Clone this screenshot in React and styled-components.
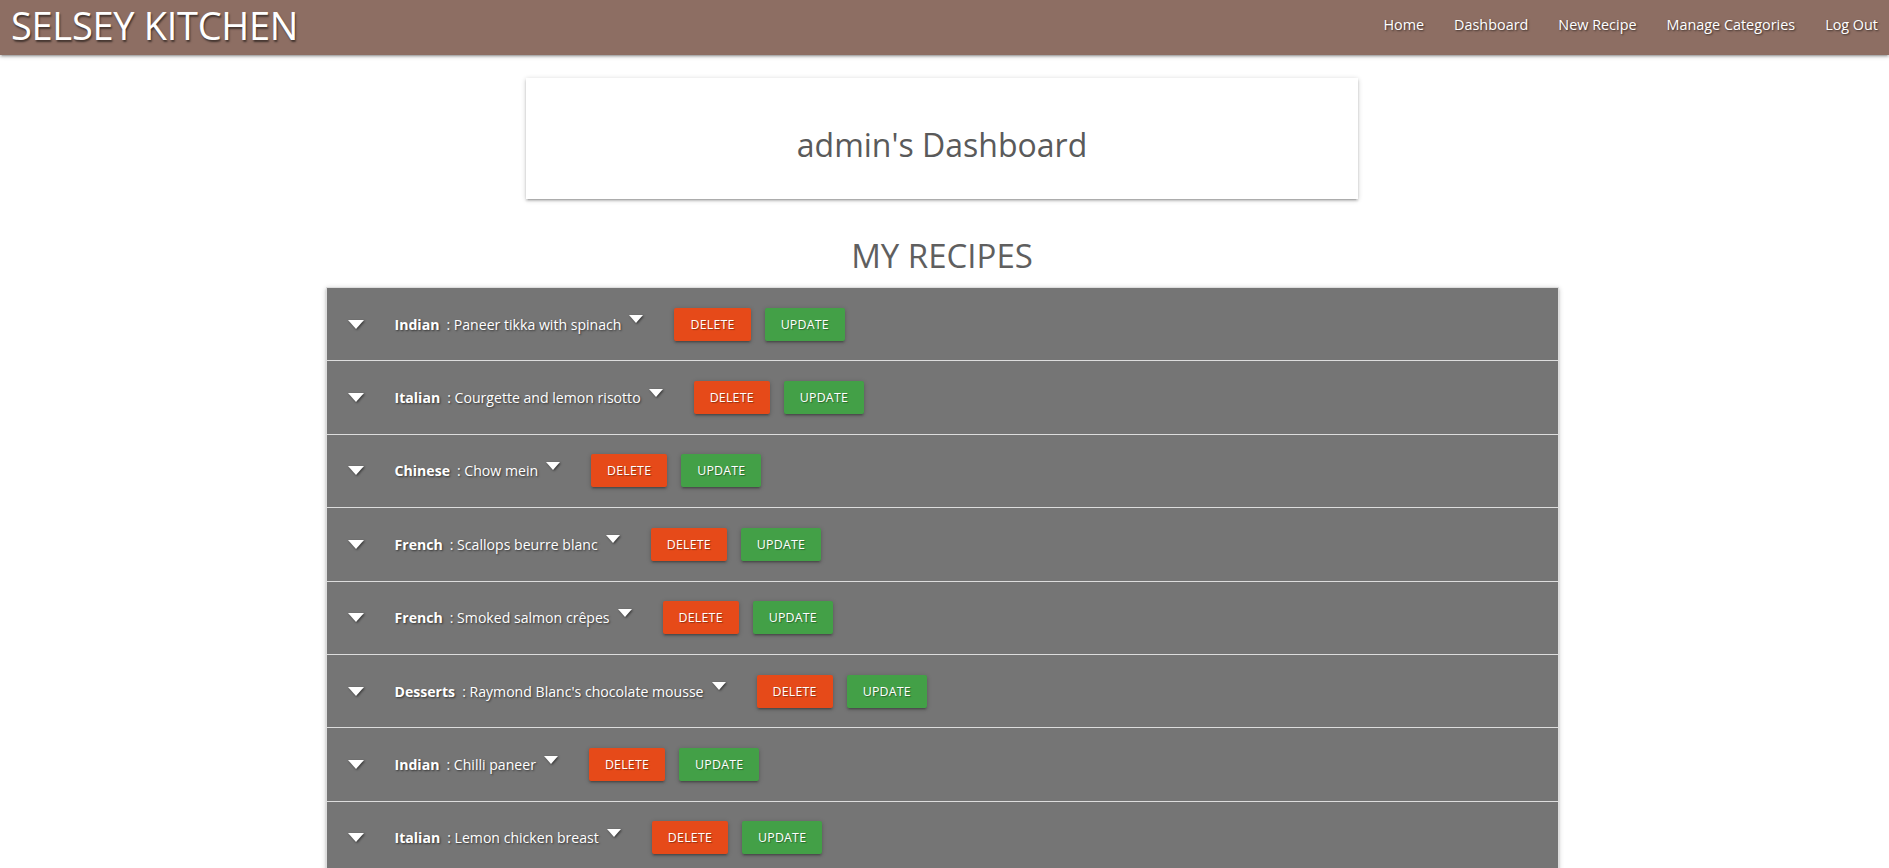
import React from "react";
import styled, { createGlobalStyle } from "styled-components";

const Global = createGlobalStyle`
  html, body { margin: 0; padding: 0; background: #fff; }
  body { font-family: "Open Sans", "Noto Sans", sans-serif; }
  * { box-sizing: border-box; }
`;

const Header = styled.header`
  height: 55px;
  background: #8d6e63;
  display: flex;
  align-items: center;
  justify-content: space-between;
  padding: 0 11px 0 11px;
  box-shadow: 0 2px 2px 0 rgba(0,0,0,0.14), 0 3px 1px -2px rgba(0,0,0,0.12), 0 1px 5px 0 rgba(0,0,0,0.2);
  position: relative;
  z-index: 2;
`;

const Brand = styled.a`
  color: #fff;
  font-size: 38px;
  line-height: 50px;
  margin-bottom: 5px;
  text-decoration: none;
  letter-spacing: -0.3px;
  text-shadow: 1px 2px 2px rgba(0,0,0,0.55);
`;

const Nav = styled.nav`
  display: flex;
  gap: 30px;
  margin-bottom: 7px;
`;

const NavLink = styled.a`
  color: #fff;
  font-size: 14.4px;
  text-decoration: none;
  text-shadow: 1px 1px 2px rgba(0,0,0,0.6);
`;

const Main = styled.main`
  padding-top: 23px;
  padding-right: 5px;
  display: flex;
  flex-direction: column;
  align-items: center;
`;

const Card = styled.section`
  width: 832px;
  height: 121px;
  display: flex;
  align-items: center;
  justify-content: center;
  padding-top: 13px;
  background: #fff;
  box-shadow: 0 2px 2px 0 rgba(0,0,0,0.14), 0 3px 1px -2px rgba(0,0,0,0.12), 0 1px 5px 0 rgba(0,0,0,0.2);
`;

const CardTitle = styled.h1`
  margin: 0;
  font-size: 32px;
  line-height: 44px;
  font-weight: 400;
  color: #5a5a5a;
`;

const SectionTitle = styled.h2`
  margin: 37px 0 11px;
  font-size: 33px;
  line-height: 40px;
  font-weight: 400;
  color: #5f5f5f;
`;

const List = styled.ul`
  list-style: none;
  margin: 0;
  padding: 0;
  width: 1233px;
  border: 1px solid #ddd;
  border-bottom: none;
  box-shadow: 0 2px 2px 0 rgba(0,0,0,0.14), 0 3px 1px -2px rgba(0,0,0,0.12), 0 1px 5px 0 rgba(0,0,0,0.2);
`;

const Row = styled.li`
  height: 73.4px;
  display: flex;
  align-items: center;
  padding-left: 21px;
  background: #757575;
  border-bottom: 1px solid #ddd;
  color: #fff;
`;

const Arrow = styled.svg`
  width: 16px;
  height: 9px;
  flex: none;
  filter: drop-shadow(1px 1px 1px rgba(0,0,0,0.55));
`;

const Label = styled.span`
  margin-left: 31px;
  font-size: 14.1px;
  text-shadow: 1px 1px 2px rgba(0,0,0,0.55);
  white-space: nowrap;
`;

const Category = styled.b`
  font-weight: 700;
  margin-right: 7px;
`;

const Caret = styled.svg`
  width: 14px;
  height: 8px;
  flex: none;
  margin-left: 8px;
  margin-bottom: 10px;
  filter: drop-shadow(1px 1px 1px rgba(0,0,0,0.55));
`;

const Button = styled.button`
  height: 33px;
  padding: 0 16px;
  margin-left: ${p => p.$first ? "31px" : "14px"};
  border: none;
  border-radius: 2px;
  background: ${p => p.$color};
  color: #fff;
  font-family: inherit;
  font-size: 12.4px;
  letter-spacing: 0.2px;
  text-transform: uppercase;
  text-shadow: 1px 1px 1px rgba(0,0,0,0.35);
  box-shadow: 0 2px 2px 0 rgba(0,0,0,0.14), 0 3px 1px -2px rgba(0,0,0,0.12), 0 1px 5px 0 rgba(0,0,0,0.2);
  cursor: pointer;
`;

const Triangle = ({ as: Comp, w, h }) => (
  <Comp viewBox={`0 0 ${w} ${h}`}>
    <polygon points={`0,0 ${w},0 ${w / 2},${h}`} fill="#fff" />
  </Comp>
);

const recipes = [
  ["Indian", "Paneer tikka with spinach"],
  ["Italian", "Courgette and lemon risotto"],
  ["Chinese", "Chow mein"],
  ["French", "Scallops beurre blanc"],
  ["French", "Smoked salmon crêpes"],
  ["Desserts", "Raymond Blanc's chocolate mousse"],
  ["Indian", "Chilli paneer"],
  ["Italian", "Lemon chicken breast"],
];

export default function App() {
  return (
    <>
      <Global />
      <Header>
        <Brand href="#">SELSEY KITCHEN</Brand>
        <Nav>
          <NavLink href="#">Home</NavLink>
          <NavLink href="#">Dashboard</NavLink>
          <NavLink href="#">New Recipe</NavLink>
          <NavLink href="#">Manage Categories</NavLink>
          <NavLink href="#">Log Out</NavLink>
        </Nav>
      </Header>
      <Main>
        <Card>
          <CardTitle>admin's Dashboard</CardTitle>
        </Card>
        <SectionTitle>MY RECIPES</SectionTitle>
        <List>
          {recipes.map(([cat, name], i) => (
            <Row key={i}>
              <Triangle as={Arrow} w={16} h={9} />
              <Label>
                <Category>{cat}</Category>: {name}
              </Label>
              <Triangle as={Caret} w={14} h={8} />
              <Button $first $color="#e64a19">Delete</Button>
              <Button $color="#43a047">Update</Button>
            </Row>
          ))}
        </List>
      </Main>
    </>
  );
}
